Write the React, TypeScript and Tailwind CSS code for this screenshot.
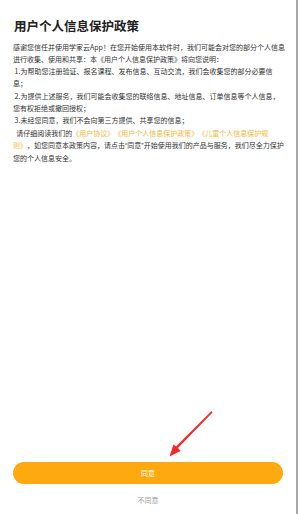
import React from "react";

const Link = ({ children }: { children: React.ReactNode }) => (
  <span className="text-[#f6b634]">{children}</span>
);

const Q = ({ children }: { children: React.ReactNode }) => (
  <span style={{ fontFamily: '"Liberation Sans", sans-serif' }}>{children}</span>
);

export default function App() {
  return (
    <div
      className="relative flex h-[514px] w-[298px] flex-col overflow-hidden bg-white border-r-2 border-[#a8a8a8]"
      style={{ fontFamily: '"Noto Sans CJK SC", "Noto Sans", sans-serif' }}
    >
      <div className="pl-[13px] pr-[10px] pt-[18px]">
        <h1 className="text-[12.5px] font-bold leading-[16px] text-[#222] pl-[1px]">
          用户个人信息保护政策
        </h1>
        <div className="mt-[6.5px] text-[7px] leading-[12.3px] text-[#333] whitespace-pre-wrap [text-spacing-trim:space-all]">
          <p>感谢您信任并使用学家云App！在您开始使用本软件时，我们可能会对您的部分个人信息进行收集、使用和共享：本《用户个人信息保护政策》将向您说明：</p>
          <p> 1.为帮助您注册验证、报名课程、发布信息、互动交流，我们会收集您的部分必要信息；</p>
          <p> 2.为提供上述服务，我们可能会收集您的联络信息、地址信息、订单信息等个人信息，您有权拒绝或撤回授权；</p>
          <p> 3.未经您同意，我们不会向第三方提供、共享您的信息；</p>
          <p>
            {"  请仔细阅读我们的"}
            <Link>《用户协议》《用户个人信息保护政策》《儿童个人信息保护规则》</Link>
            ，如您同意本政策内容，请点击<Q>“</Q>同意<Q>”</Q>开始使用我们的产品与服务，我们尽全力保护您的个人信息安全。
          </p>
        </div>
      </div>
      <div className="flex-1" />
      <div className="px-[13px] pb-[8px]">
        <button className="flex h-[22px] w-full items-center justify-center rounded-full bg-[#fea90f] text-[7px] text-white">
          同意
        </button>
        <div className="mt-[10px] text-center text-[7px] leading-[12px] text-[#9a9a9a]">不同意</div>
      </div>
      <svg
        className="absolute left-0 top-0 pointer-events-none"
        width="298"
        height="514"
        viewBox="0 0 298 514"
      >
        <polygon points="211.5,411 212.5,412.5 178,448 180.5,451 169.5,456.5 173.5,444.5 176,446.5" fill="#f42a2a" />
      </svg>
    </div>
  );
}
